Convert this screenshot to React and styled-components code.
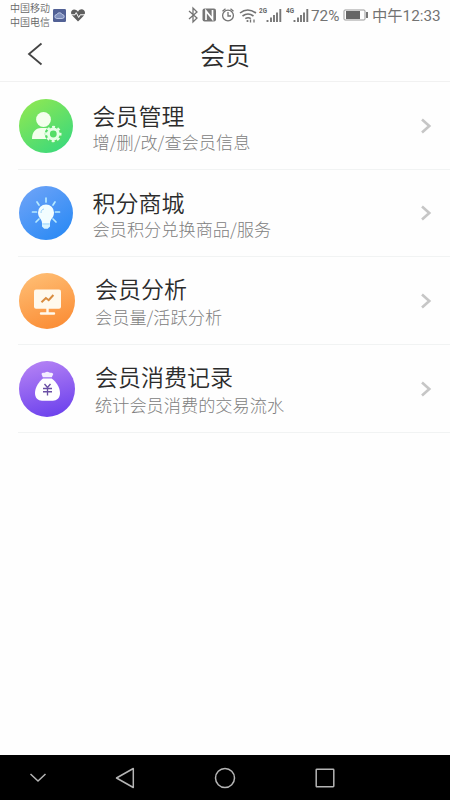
import React from "react";
import styled, { createGlobalStyle } from "styled-components";

const GlobalStyle = createGlobalStyle`
  * { box-sizing: border-box; }
  body { margin: 0; background: #fefefe; font-family: "Noto Sans CJK SC", sans-serif; }
  svg { display: block; flex: none; }
`;

const Screen = styled.div`
  width: 450px;
  height: 800px;
  display: flex;
  flex-direction: column;
  background: #fefefe;
  overflow: hidden;
`;

const StatusBar = styled.div`
  height: 30px;
  display: flex;
  align-items: center;
  padding: 0 10px;
  color: #737373;
  flex: none;
`;

const Carriers = styled.div`
  width: 43px;
  font-size: 10px;
  line-height: 14px;
  font-weight: 350;
  color: #666;
  white-space: nowrap;
`;

const StatusIcons = styled.div`
  display: flex;
  align-items: center;
  margin-left: ${(p) => p.$left}px;
`;

const StatusText = styled.span`
  width: ${(p) => p.$width}px;
  margin-left: ${(p) => p.$left}px;
  padding-top: 1px;
  font: 400 15.3px/20px Roboto, "Noto Sans CJK SC", sans-serif;
  white-space: nowrap;
`;

const Header = styled.header`
  height: 52px;
  padding-bottom: 4px;
  display: grid;
  grid-template-columns: 72px 1fr 72px;
  align-items: center;
  border-bottom: 1px solid #f1f1f1;
  flex: none;
`;

const BackButton = styled.button`
  height: 46px;
  padding: 0 0 0 26px;
  border: 0;
  background: none;
`;

const Title = styled.h1`
  margin: 0;
  text-align: center;
  font-size: 25px;
  line-height: 46px;
  font-weight: 350;
  color: #2c2c2c;
`;

const List = styled.main`
  flex: 1;
`;

const Row = styled.section`
  height: ${(p) => p.$height}px;
  margin-left: 18px;
  padding-right: 17px;
  display: flex;
  align-items: center;
  border-bottom: 1px solid #f1f3f3;
`;

const Badge = styled.div`
  width: ${(p) => p.$size}px;
  height: ${(p) => p.$size}px;
  margin-left: ${(p) => (p.$size === 56 ? 1 : 0.5)}px;
  border-radius: 50%;
  background: ${(p) => p.$fill};
  display: flex;
  align-items: center;
  justify-content: center;
  flex: none;
`;

const Copy = styled.div`
  flex: 1;
  padding: ${(p) => p.$top}px 0 0 20px;
`;

const RowTitle = styled.div`
  font-size: 23px;
  line-height: 28px;
  font-weight: 350;
  color: #2c2c2c;
  white-space: nowrap;
`;

const RowNote = styled.div`
  margin-top: ${(p) => p.$gap}px;
  font-size: 17.2px;
  line-height: 24px;
  font-weight: 300;
  color: #808080;
  white-space: nowrap;
`;

const NavBar = styled.nav`
  height: 45px;
  background: #000;
  display: grid;
  grid-template-columns: 75px 100px 100px 100px;
  justify-items: center;
  align-items: center;
  flex: none;
`;

const MemberIcon = () => (
  <svg width="54" height="54" viewBox="0 0 54 54">
    <circle cx="24.5" cy="20.5" r="7.4" fill="#f3ffed" />
    <path d="M13 40c0-7 3.5-11 9-11h5c3 0 5 1 6.5 3L27 40Z" fill="#f3ffed" />
    <circle cx="34.3" cy="35" r="5.6" fill="#54dd66" stroke="#54dd66" strokeWidth="6" />
    <circle cx="34.3" cy="35" r="4.9" fill="none" stroke="#e5ffe5" strokeWidth="3" />
    <circle cx="34.3" cy="35" r="7" fill="none" stroke="#e5ffe5" strokeWidth="2.4" strokeDasharray="2.9 2.6" strokeDashoffset="1.4" />
  </svg>
);

const BulbIcon = () => (
  <svg width="54" height="54" viewBox="0 0 54 54">
    <path d="M27 12v4M18 16l2 3M36 16l-2 3M13.5 26h4M36.5 26h4M17 36l3-3M37 36l-3-3" stroke="#b7eaff" strokeWidth="1.7" strokeLinecap="round" />
    <path d="M23 37c0-4-4-5-4-10.5a8 8 0 0 1 16 0C35 32 31 33 31 37Z" fill="#f2fdff" />
    <path d="M23 37h8v3.4l-2.3 2.3h-3.4L23 40.4Z" fill="#d8f4ff" />
    <path d="M22 27c0-2.3 1-3.6 3-4" fill="none" stroke="#97cff8" />
    <path d="M23.5 38h7" stroke="#8ac9fc" strokeWidth=".7" />
  </svg>
);

const ChartIcon = () => (
  <svg width="56" height="56" viewBox="0 0 56 56">
    <rect x="15" y="16.5" width="27" height="19.3" rx="2" fill="#fff9ed" />
    <path d="M28.5 35v5M22 40.5h13" stroke="#fff9ed" strokeWidth="2.4" strokeLinecap="round" />
    <path d="m22.5 29.2 4.4-4.2 2.8 2.2 4.7-5.2" fill="none" stroke="#d98c3f" strokeWidth="2" />
  </svg>
);

const MoneyIcon = () => (
  <svg width="56" height="56" viewBox="0 0 56 56">
    <path d="M23.8 16.2 22.5 13c1-2 2.4-.7 3.5-1.4 1.4-1 3-1 4.3 0 1.2.8 2.7-.3 4 1.4l-1.5 3.2Z" fill="#f4edff" />
    <path d="M24 17.5h8.7C37 20.5 41 26.5 41 32c0 5-3.2 7.7-7.2 7.7H23C19 39.7 16 37 16 32c0-5.5 4-11.5 8-14.5Z" fill="#fff" />
    <path d="m25.5 23 3 3.5 3-3.5M24 27.5h9M24 30.7h9M28.5 26.5v8" fill="none" stroke="#6a4fa4" strokeWidth="1.35" />
  </svg>
);

const items = [
  { title: "会员管理", note: "增/删/改/查会员信息", height: 88, size: 54, top: 3, gap: 1, fill: "linear-gradient(145deg,#96e94f,#31d780)", Icon: MemberIcon },
  { title: "积分商城", note: "会员积分兑换商品/服务", height: 87, size: 54, top: 3, gap: 1, fill: "linear-gradient(145deg,#72a5f8,#2387f4)", Icon: BulbIcon },
  { title: "会员分析", note: "会员量/活跃分析", height: 88, size: 56, top: 2, gap: 3, fill: "linear-gradient(160deg,#ffc178,#fa882f)", Icon: ChartIcon },
  { title: "会员消费记录", note: "统计会员消费的交易流水", height: 88, size: 56, top: 2, gap: 3, fill: "linear-gradient(165deg,#b986f5,#663cec)", Icon: MoneyIcon },
];

const Signal = ({ label }) => (
  <svg width="25" height="18" viewBox="0 0 25 18">
    <text x="0" y="7" fontFamily="Roboto" fontSize="7" fontWeight="700" fill="#666" textLength="8" lengthAdjust="spacingAndGlyphs">{label}</text>
    <path d="M8.5 14v2M12 11.5V16M15 9v7M18 6.5V16M21.3 3v13" stroke="#777" strokeWidth="1.9" />
  </svg>
);

export default function App() {
  return (
    <>
      <GlobalStyle />
      <Screen>
        <StatusBar>
          <Carriers>
            <div>中国移动</div>
            <div>中国电信</div>
          </Carriers>
          <svg width="34" height="14" viewBox="0 0 34 14">
            <rect x="0" y="1" width="13" height="13" rx="1.2" fill="#526195" />
            <path d="M3.8 10.5a2 2 0 0 1 .1-4 2.8 2.8 0 0 1 5.2 0 2 2 0 0 1 .2 4Z" fill="#8090bd" stroke="#c5cfea" strokeWidth=".9" />
            <path d="M25 13.5 18.7 7c-2-3.4 1-7 4.5-5 .8.4 1.3 1 1.8 1.7 2-3.8 7-2.7 7 1 0 2-2.3 4.3-7 8.8Z" fill="#5e5e5e" />
            <path d="M18 6.8h4l1.2-2.2 2.5 4.9 1.5-2.7H32" fill="none" stroke="#fff" />
          </svg>
          <StatusIcons $left={101}>
            <svg width="71" height="18" viewBox="0 0 71 18" fill="none" stroke="#737373" strokeWidth="1.3">
              <path d="m1 5 8 7-4 4V2l4 4-8 7" />
              <rect x="14.5" y="2.5" width="13.5" height="13" rx="2" fill="#777" stroke="none" />
              <path d="M18 14V5l6.5 8V4" stroke="#fff" strokeWidth="1.7" />
              <circle cx="40" cy="9.5" r="5.4" />
              <path d="M40 6v4h3M34.5 5.2l3-2.4M42.5 2.8l3 2.4" />
              <path d="M52 7q7.5-6 16 0M54.5 10q5.5-4 11 0M57.3 12.7q3-2 5.5 0" strokeWidth="1.6" />
              <circle cx="59.5" cy="15" r="1.1" fill="#737373" stroke="none" />
              <path d="M62.5 13.5v3M66 13.5v3" />
            </svg>
            <Signal label="2G" />
          </StatusIcons>
          <StatusIcons $left={2}><Signal label="4G" /></StatusIcons>
          <StatusText $width={29} $left={0}>72%</StatusText>
          <svg width="29" height="14" viewBox="-3 0 29 14">
            <rect x="1" y="2" width="21" height="10" rx="1" fill="none" stroke="#999" />
            <rect x="3" y="3" width="14" height="8" fill="#666" />
            <path d="M24 4v6" stroke="#777" strokeWidth="2" />
          </svg>
          <StatusText $width={68} $left={3}>中午12:33</StatusText>
        </StatusBar>
        <Header>
          <BackButton aria-label="返回">
            <svg width="18" height="26" viewBox="0 0 18 26">
              <path d="m15.5 2.5-12.5 10.5L15.5 23.5" fill="none" stroke="#444" strokeWidth="1.8" />
            </svg>
          </BackButton>
          <Title>会员</Title>
        </Header>
        <List>
          {items.map(({ title, note, height, size, top, gap, fill, Icon }) => (
            <Row key={title} $height={height}>
              <Badge $size={size} $fill={fill}><Icon /></Badge>
              <Copy $top={top}>
                <RowTitle>{title}</RowTitle>
                <RowNote $gap={gap}>{note}</RowNote>
              </Copy>
              <svg width="14" height="18" viewBox="0 0 14 18">
                <path d="m3 2.5 7.3 6.5L3 15.5" fill="none" stroke="#c6c6c6" strokeWidth="2.6" />
              </svg>
            </Row>
          ))}
        </List>
        <NavBar>
          <svg width="18" height="20" viewBox="0 0 18 20" fill="none" stroke="#b5b5b5" strokeWidth="1.5"><path d="m1.5 6 7.5 7 7.5-7" /></svg>
          <svg width="20" height="24" viewBox="0 0 20 24" fill="none" stroke="#b5b5b5" strokeWidth="1.5"><path d="M18.3 2.5v19L1.5 12Z" strokeLinejoin="round" /></svg>
          <svg width="22" height="22" viewBox="0 0 22 22" fill="none" stroke="#b5b5b5" strokeWidth="1.5"><circle cx="11" cy="11" r="9.5" /></svg>
          <svg width="20" height="20" viewBox="0 0 20 20" fill="none" stroke="#b5b5b5" strokeWidth="1.5"><rect x="1.2" y="1.2" width="17.6" height="17.6" rx=".7" /></svg>
        </NavBar>
      </Screen>
    </>
  );
}
